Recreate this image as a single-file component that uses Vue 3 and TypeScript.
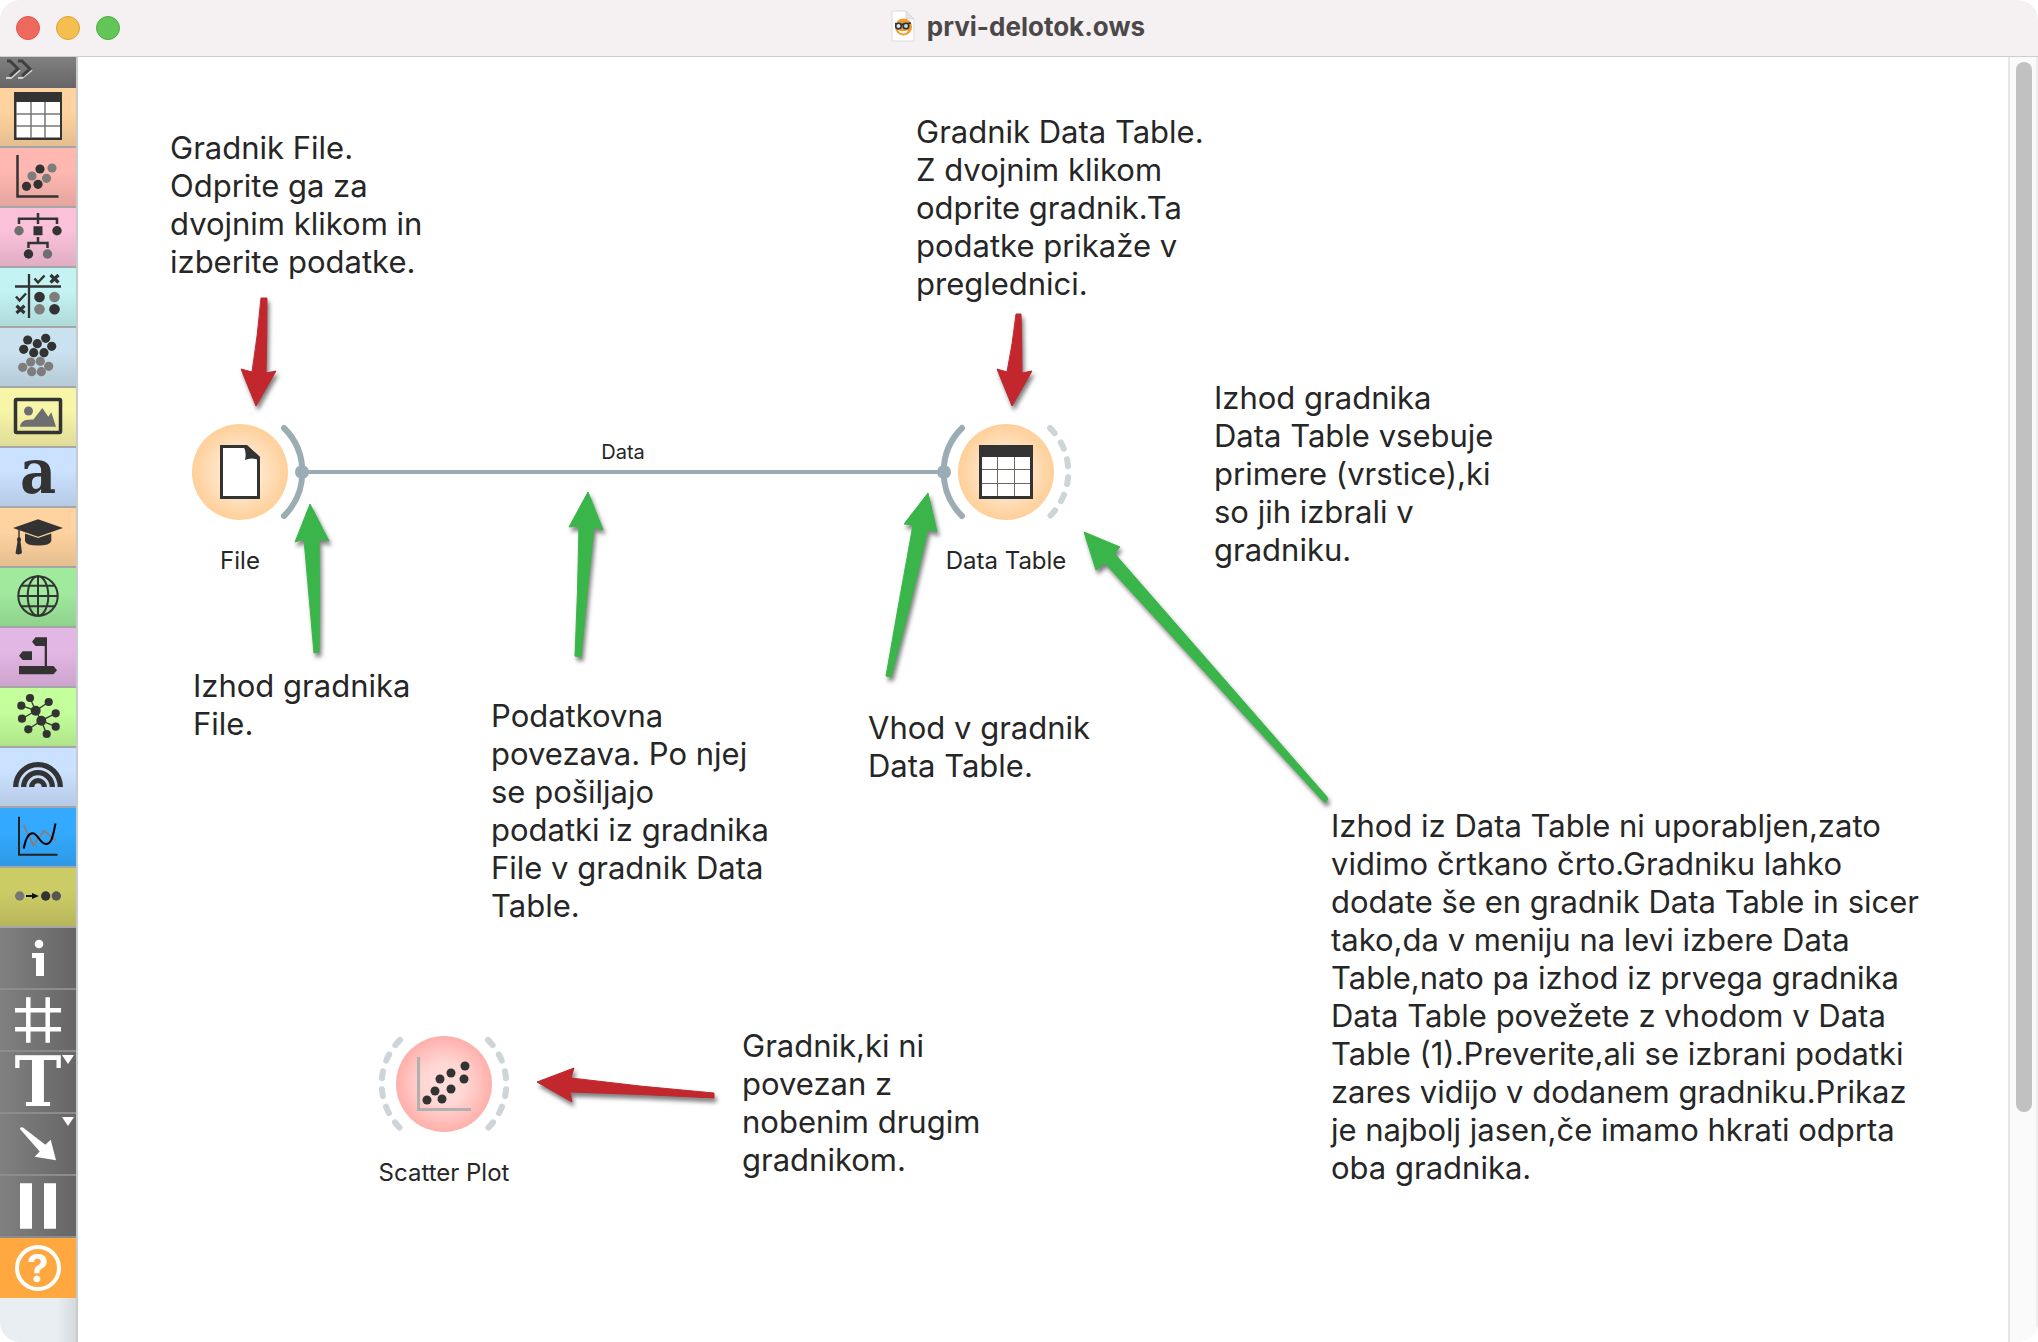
<script setup lang="ts">
interface Note {
  id: string
  x: number
  y: number
  lines: string[]
}

interface Caption {
  text: string
  x: number
  y: number
  small?: boolean
}

const notes: Note[] = [
  { id: 'file', x: 92, y: 72, lines: ['Gradnik File.', 'Odprite ga za', 'dvojnim klikom in', 'izberite podatke.'] },
  {
    id: 'table',
    x: 838,
    y: 56,
    lines: ['Gradnik Data Table.', 'Z dvojnim klikom', 'odprite gradnik.Ta', 'podatke prikaže v', 'preglednici.'],
  },
  {
    id: 'table-output',
    x: 1136,
    y: 322,
    lines: ['Izhod gradnika', 'Data Table vsebuje', 'primere (vrstice),ki', 'so jih izbrali v', 'gradniku.'],
  },
  { id: 'file-output', x: 115, y: 610, lines: ['Izhod gradnika', 'File.'] },
  {
    id: 'link',
    x: 413,
    y: 640,
    lines: ['Podatkovna', 'povezava. Po njej', 'se pošiljajo', 'podatki iz gradnika', 'File v gradnik Data', 'Table.'],
  },
  { id: 'table-input', x: 790, y: 652, lines: ['Vhod v gradnik', 'Data Table.'] },
  { id: 'scatter', x: 664, y: 970, lines: ['Gradnik,ki ni', 'povezan z', 'nobenim drugim', 'gradnikom.'] },
  {
    id: 'unused-output',
    x: 1253,
    y: 750,
    lines: [
      'Izhod iz Data Table ni uporabljen,zato',
      'vidimo črtkano črto.Gradniku lahko',
      'dodate še en gradnik Data Table in sicer',
      'tako,da v meniju na levi izbere Data',
      'Table,nato pa izhod iz prvega gradnika',
      'Data Table povežete z vhodom v Data',
      'Table (1).Preverite,ali se izbrani podatki',
      'zares vidijo v dodanem gradniku.Prikaz',
      'je najbolj jasen,če imamo hkrati odprta',
      'oba gradnika.',
    ],
  },
]

const captions: Caption[] = [
  { text: 'File', x: 162, y: 490 },
  { text: 'Data Table', x: 928, y: 490 },
  { text: 'Scatter Plot', x: 366, y: 1102 },
  { text: 'Data', x: 545, y: 383, small: true },
]

const redArrows: string[] = [
  'M261 298H267Q267 336 266 373L276 371 256 406 241 369 252 372Q258 334 261 298Z',
  'M1016 314H1021Q1022 344 1022 373L1032 371 1012 406 997 369 1007 372Q1013 342 1016 314Z',
  'M537 1082L574 1068 571 1078Q642 1087 714 1093V1098Q640 1094 570 1092L572 1102Z',
]

const greenArrows: string[] = [
  'M310 504L295 542 304 539Q309 596 314 653L319 652Q320 596 319 539L329 541Z',
  'M588 492L569 527 579 526Q578 592 575 656L581 657Q587 592 594 527L603 530Z',
  'M928 493L904 524 913 525Q899 601 886 676L891 677Q911 604 928 529L937 532Z',
  'M1084 532L1120 547 1114 553 1327 797Q1329 801 1324 802L1105 563 1096 570Z',
]

const scatterDots: [number, number][] = [
  [427, 1100], [435, 1091], [442, 1099], [440, 1079], [451, 1089], [451, 1073], [464, 1079], [465, 1066],
]
</script>

<template>
  <div class="window">
    <header class="titlebar">
      <div class="lights">
        <button type="button" class="light close" aria-label="Zapri"></button>
        <button type="button" class="light minimize" aria-label="Pomanjšaj"></button>
        <button type="button" class="light zoom" aria-label="Povečaj"></button>
      </div>
      <h1 class="title">
        <svg width="24" height="32" viewBox="0 0 24 32" aria-hidden="true">
          <path d="M1 1H15L23 9V31H1Z" fill="#fff" stroke="#dedcdd" />
          <path d="M15 1V9H23Z" fill="#e6e4e5" stroke="#d2d0d1" stroke-width=".6" />
          <circle cx="12.500" cy="17" r="8.500" fill="#f39a2a" />
          <path d="M7 20Q12 22.500 17 20Q16 24 11.500 23.500 8 23 7 20Z" fill="#fff" />
          <path d="M4 13.500Q12 15 20 13" fill="none" stroke="#263342" stroke-width="1.500" />
          <circle cx="7.500" cy="16" r="2.800" fill="#dbe8f0" stroke="#263342" stroke-width="1.600" />
          <circle cx="15" cy="16" r="2.800" fill="#b9d6e4" stroke="#263342" stroke-width="1.600" />
        </svg>
        <span>prvi-delotok.ows</span>
      </h1>
    </header>

    <div class="body">
      <nav class="toolbox" aria-label="Orodja">
        <button type="button" class="toggle" aria-label="Razširi">
          <svg width="76" height="31" viewBox="0 0 76 31" fill="none">
            <path d="M6 21H11L20 13M18 21H22L32 13" stroke="#d0d0d0" stroke-width="2" />
            <path d="M7 4H10L18 12 10 19M18 4H22L30 12 22 19" stroke="#404040" stroke-width="3" />
          </svg>
        </button>

        <button type="button" class="tile orange" aria-label="Data">
          <svg viewBox="0 0 76 58">
            <path fill="#333" d="M14 4H62V52H14Z" />
            <path fill="#fff" d="M16.500 14H60V49.500H16.500Z" />
            <path d="M31 14V50M45 14V50M16 26H60M16 38H60" fill="none" stroke="#777" stroke-width="1.500" />
          </svg>
        </button>
        <button type="button" class="tile red" aria-label="Visualize">
          <svg viewBox="0 0 76 58">
            <path d="M17.500 7V48.500H58.500" fill="none" stroke="#333" stroke-width="2.500" />
            <g fill="#7d7d7d"><circle cx="52" cy="20" r="4.600" /><circle cx="32" cy="28" r="4.600" /><circle cx="46.500" cy="30.300" r="4.600" /></g>
            <g fill="#333"><circle cx="40" cy="21" r="4.600" /><circle cx="26.500" cy="38.300" r="4.600" /><circle cx="38" cy="36.300" r="4.600" /></g>
          </svg>
        </button>
        <button type="button" class="tile pink" aria-label="Model">
          <svg viewBox="0 0 76 58">
            <path d="M19 16V10.700H57V16M38 5V16M38 29V35M28.500 40V35H47.500V40" fill="none" stroke="#333" stroke-width="2.500" />
            <path fill="#333" d="M33.500 18.300H42.500V27.300H33.500Z" />
            <g fill="#6e6e6e"><circle cx="19" cy="22.700" r="4.700" /><circle cx="47.500" cy="46" r="4.700" /></g>
            <g fill="#333"><circle cx="57" cy="22.700" r="4.700" /><circle cx="28.500" cy="46" r="4.700" /></g>
          </svg>
        </button>
        <button type="button" class="tile cyan" aria-label="Evaluate">
          <svg viewBox="0 0 76 58">
            <g fill="none" stroke="#333">
              <path d="M29 6V50M15 18.500H61" stroke-width="2.300" />
              <path d="M34.500 10.500L38 14.500 44.500 7.500M16 28.500L19.500 32.500 26 25.500" stroke-width="2.500" />
              <path d="M50.500 7L58.500 14.500M58.500 7L50.500 14.500M16.500 37.700L24.500 45M24.500 37.700L16.500 45" stroke-width="3.200" />
            </g>
            <g fill="#7d7d7d"><circle cx="54.500" cy="29" r="5.300" /><circle cx="39.500" cy="41.300" r="5.300" /></g>
            <g fill="#333"><circle cx="39.500" cy="29" r="5.300" /><circle cx="54.500" cy="41.300" r="5.300" /></g>
          </svg>
        </button>
        <button type="button" class="tile steel" aria-label="Unsupervised">
          <svg viewBox="0 0 76 58">
            <g fill="#333">
              <circle cx="27.700" cy="12" r="4.600" /><circle cx="45.700" cy="10.300" r="4.600" /><circle cx="37.300" cy="15.700" r="4.600" />
              <circle cx="51.700" cy="18.300" r="4.600" /><circle cx="23.700" cy="21.300" r="4.600" /><circle cx="33.700" cy="24.700" r="4.600" />
              <circle cx="44" cy="24.700" r="4.600" />
            </g>
            <g fill="#7d7d7d">
              <circle cx="30.700" cy="34" r="4.600" /><circle cx="40.300" cy="33.300" r="4.600" /><circle cx="22.700" cy="39.300" r="4.600" />
              <circle cx="48.700" cy="38.300" r="4.600" /><circle cx="31.700" cy="43.700" r="4.600" /><circle cx="41.300" cy="43.700" r="4.600" />
            </g>
          </svg>
        </button>
        <button type="button" class="tile yellow" aria-label="Image Analytics">
          <svg viewBox="0 0 76 58">
            <rect x="15.500" y="11.500" width="45" height="33" rx="1" fill="none" stroke="#333" stroke-width="3.500" />
            <circle cx="28.500" cy="23" r="4.500" fill="#6e6e6e" />
            <path fill="#6e6e6e" d="M20 38.700Q21 32 28 31.700L33.500 31.500 42.300 20 48.300 28.700 51.300 24.300 56 38.700Z" />
          </svg>
        </button>
        <button type="button" class="tile blue letter" aria-label="Text Mining"><span>a</span></button>
        <button type="button" class="tile orange" aria-label="Educational">
          <svg viewBox="0 0 76 58" fill="#333">
            <path d="M13 20L38 11.300 63 20 38 28.700Z" />
            <path d="M25 25.500L38 30 51.300 25.500V33Q50 37.500 38 37.500T25 33Z" />
            <path d="M18.300 22H19.700V29Q22 31 20.500 33.500L22 45Q19 47.500 15.500 45.500L17.500 33.500Q16 31 18.300 29Z" />
          </svg>
        </button>
        <button type="button" class="tile green" aria-label="Geo">
          <svg viewBox="0 0 76 58" fill="none" stroke="#333" stroke-width="2">
            <circle cx="38" cy="28" r="19.700" />
            <ellipse cx="38" cy="28" rx="10.300" ry="19.700" />
            <path d="M38 8V48M18 28H58M21.500 17.700H54.500M21.500 38.300H54.500" />
          </svg>
        </button>
        <button type="button" class="tile violet" aria-label="Associate">
          <svg viewBox="0 0 76 58" fill="#333">
            <path d="M32 13.700L35.500 9.300H47V38H53.500L57 42.300 53.500 46.300H19V38H44.700V18H35.500Z" />
            <path d="M19 27.700L22.700 23.300H32V32H22.700Z" />
          </svg>
        </button>
        <button type="button" class="tile lime" aria-label="Network">
          <svg viewBox="0 0 76 58">
            <path d="M30 10L35.700 22.700 48.700 14M21.300 17.700L35.700 22.700 22 30.700M35.700 22.700L41.300 32.700 55.700 25.300M28.300 41.300L41.300 32.700 55.700 38.700M41.300 32.700L46.700 46" fill="none" stroke="#333" stroke-width="1.300" />
            <g fill="#333">
              <circle cx="35.700" cy="22.700" r="5" /><circle cx="41.300" cy="32.700" r="5" />
              <circle cx="30" cy="10" r="4.100" /><circle cx="48.700" cy="14" r="4.100" /><circle cx="21.300" cy="17.700" r="4.100" />
              <circle cx="22" cy="30.700" r="4.100" /><circle cx="55.700" cy="25.300" r="4.100" /><circle cx="55.700" cy="38.700" r="4.100" />
              <circle cx="28.300" cy="41.300" r="4.100" /><circle cx="46.700" cy="46" r="4.100" />
            </g>
          </svg>
        </button>
        <button type="button" class="tile blue" aria-label="Spectroscopy">
          <svg viewBox="0 0 76 58" fill="none" stroke="#333" stroke-width="5.300">
            <path d="M15.700 39A22.300 22.300 0 0 1 60.300 39M23.700 39A14.300 14.300 0 0 1 52.300 39M31.700 39A6.300 6.300 0 0 1 44.300 39" />
          </svg>
        </button>
        <button type="button" class="tile azure" aria-label="Time Series">
          <svg viewBox="0 0 76 58" fill="none" stroke-width="2">
            <path d="M19 8.700V46.700H57.500" stroke="#222" />
            <path d="M23.700 17.300L33.300 37.300 44 22.700 56 32.700" stroke="#808080" />
            <path d="M23.700 40.500C26 29 29 25.300 32.500 25.300C38 25.300 40 36 46 36C52 36 53 27 55.500 15.500" stroke="#000" />
          </svg>
        </button>
        <button type="button" class="tile olive" aria-label="Prototypes">
          <svg viewBox="0 0 76 58">
            <circle cx="19.700" cy="28" r="4.700" fill="#777" />
            <path d="M26 27H32V25L39 28 32 31V29H26Z" fill="#111" />
            <circle cx="45.700" cy="28" r="4.700" fill="#333" /><circle cx="56.300" cy="28" r="4.700" fill="#555" />
          </svg>
        </button>

        <button type="button" class="tool" aria-label="Informacije">
          <svg viewBox="0 0 76 60" fill="#fff">
            <circle cx="39" cy="16" r="4.300" />
            <path d="M32 25H44V48H36V30H32Z" />
          </svg>
        </button>
        <button type="button" class="tool" aria-label="Mreža">
          <svg viewBox="0 0 76 60" fill="none" stroke="#fff" stroke-width="4.500">
            <path d="M28.300 7.300V52.700M47.700 7.300V52.700M15 20.300H61M15 39.300H61" />
          </svg>
        </button>
        <button type="button" class="tool text-tool" aria-label="Besedilo">
          <span>T</span>
          <svg class="marker" width="12" height="9" viewBox="0 0 12 9"><path d="M0 0H12L6 9Z" fill="#fff" /></svg>
        </button>
        <button type="button" class="tool" aria-label="Puščica">
          <svg viewBox="0 0 76 60" fill="#fff">
            <path d="M20 15Q20 12.500 23 13.500L45.300 30.700 50.700 25.700 56 46.300 34.700 42.700 39.700 37.500Z" />
          </svg>
          <svg class="marker" width="12" height="9" viewBox="0 0 12 9"><path d="M0 0H12L6 9Z" fill="#fff" /></svg>
        </button>
        <button type="button" class="tool" aria-label="Premor">
          <svg viewBox="0 0 76 60" fill="#fff"><path d="M20 7.300H32V52.700H20ZM44 7.300H56V52.700H44Z" /></svg>
        </button>
        <button type="button" class="help" aria-label="Pomoč"><span>?</span></button>
      </nav>

      <main class="canvas">
        <svg class="scheme" aria-hidden="true">
          <defs>
            <radialGradient id="orangeFill">
              <stop offset="0" stop-color="#fff1e2" /><stop offset=".5" stop-color="#ffe3c4" /><stop offset="1" stop-color="#ffcf98" />
            </radialGradient>
            <radialGradient id="redFill">
              <stop offset="0" stop-color="#ffdedb" /><stop offset=".45" stop-color="#ffd6d3" /><stop offset="1" stop-color="#ffafaa" />
            </radialGradient>
          </defs>
          <g transform="translate(-78 -57)">
            <g fill="none" stroke="#9cacb4" stroke-linecap="round">
              <path d="M302 472H944" stroke-width="4" />
              <path d="M284 428A62 62 0 0 1 284 516M962 428A62 62 0 0 0 962 516" stroke-width="6" />
              <path
                d="M1050 428A62 62 0 0 1 1050 516M488 1040A62 62 0 0 1 488 1128M400 1040A62 62 0 0 0 400 1128"
                stroke="#cdd5d9" stroke-width="6" stroke-dasharray="7 11"
              />
            </g>
            <g fill="#9cacb4"><circle cx="302" cy="472" r="7" /><circle cx="944" cy="472" r="7" /></g>

            <circle cx="240" cy="472" r="48" fill="url(#orangeFill)" />
            <path d="M221.500 446.500H246.500L258.500 457.500V497.500H221.500Z" fill="#fff" stroke="#333" stroke-width="3" />
            <path d="M243 446H247L259 457V460Q251 457 245 460Q247 451 243 446Z" fill="#333" />

            <circle cx="1006" cy="472" r="48" fill="url(#orangeFill)" />
            <path d="M979 445H1033V499H979Z" fill="#333" />
            <path d="M982 457H1030V496H982Z" fill="#fff" />
            <path d="M997.500 457V496M1014.500 457V496M982 469.500H1030M982 483.500H1030" fill="none" stroke="#6d6762" />

            <circle cx="444" cy="1084" r="48" fill="url(#redFill)" />
            <path d="M418.500 1057V1109.500H471" fill="none" stroke="#b0b0b0" stroke-width="3" />
            <circle v-for="([cx, cy], i) in scatterDots" :key="i" :cx="cx" :cy="cy" r="4.500" fill="#333" />

            <g class="arrows red"><path v-for="d in redArrows" :key="d" :d="d" /></g>
            <g class="arrows green"><path v-for="d in greenArrows" :key="d" :d="d" /></g>
          </g>
        </svg>

        <span
          v-for="c in captions"
          :key="c.text"
          class="caption"
          :class="{ small: c.small }"
          :style="{ left: c.x + 'px', top: c.y + 'px' }"
        >{{ c.text }}</span>

        <p v-for="n in notes" :key="n.id" class="note" :style="{ left: n.x + 'px', top: n.y + 'px' }">
          <span v-for="line in n.lines" :key="line">{{ line }}</span>
        </p>
      </main>

      <div class="scrollbar"><div class="thumb"></div></div>
    </div>
  </div>
</template>

<style>
body {
  margin: 0;
  background: #fff;
}
</style>

<style scoped>
.window {
  display: flex;
  flex-direction: column;
  min-height: 100vh;
  overflow: hidden;
  border-radius: 20px;
  background: #fff;
  color: #262626;
  font-family: Inter, 'Liberation Sans', sans-serif;
}

button {
  display: block;
  box-sizing: border-box;
  margin: 0;
  padding: 0;
  border: 0;
  font-family: inherit;
}

.titlebar {
  display: grid;
  grid-template-columns: 1fr auto 1fr;
  align-items: center;
  height: 56px;
  border-bottom: 1px solid #d0cdcf;
  background: #f5f1f3;
}

.lights {
  display: flex;
  gap: 16px;
  padding-left: 16px;
}

.light {
  width: 24px;
  height: 24px;
  border-radius: 50%;
}

.close {
  border: 1px solid #d9564c;
  background: #ee6a5f;
}

.minimize {
  border: 1px solid #dba13a;
  background: #f5bf4f;
}

.zoom {
  border: 1px solid #4dac42;
  background: #61c655;
}

.title {
  display: flex;
  align-items: center;
  gap: 12px;
  margin: 0;
  padding: 0 2px 2px 0;
  color: #4b484a;
  font-size: 26px;
  font-weight: 700;
  line-height: 32px;
}

.title svg {
  margin-bottom: 2px;
}

.body {
  display: flex;
  flex: 1;
}

.toolbox {
  width: 76px;
  border-right: 2px solid #c6cbce;
  background: linear-gradient(90deg, #e8eef2 75%, #d3d9dd);
}

.toggle {
  width: 100%;
  height: 31px;
  background: linear-gradient(#808080, #666);
}

.tile,
.tool,
.help {
  position: relative;
  width: 100%;
}

.tile {
  height: 60px;
  border-bottom: 2px solid #a6a6a6;
  background-image: linear-gradient(transparent 40%, rgba(0, 0, 0, 0.1));
}

.tile svg,
.tool svg {
  display: block;
}

.orange { background-color: #ffd39f; }
.red { background-color: #ffb7b1; }
.pink { background-color: #fac1d9; }
.cyan { background-color: #c3f3f3; }
.steel { background-color: #cae1ef; }
.yellow { background-color: #f7f5a8; }
.blue { background-color: #cae1ff; }
.green { background-color: #a0ea9e; }
.violet { background-color: #e3b7e4; }
.lime { background-color: #c3ff9a; }
.azure { background-color: #33aaff; }
.olive { background-color: #cccc66; }

.letter {
  padding-bottom: 10px;
  color: #333;
  font-family: 'DejaVu Serif Condensed', 'DejaVu Serif', serif;
  font-size: 62px;
  font-weight: 700;
  line-height: 44px;
}

.tool {
  height: 62px;
  border-bottom: 2px solid #8c8c8c;
  background: linear-gradient(90deg, #808080, #666);
}

.text-tool {
  color: #fff;
  font-family: 'DejaVu Serif Condensed', 'DejaVu Serif', serif;
  font-size: 70px;
  font-weight: 700;
  line-height: 60px;
}

.tool .marker {
  position: absolute;
  top: 3px;
  right: 2px;
}

.help {
  display: flex;
  align-items: center;
  justify-content: center;
  height: 60px;
  background: #ffa840;
  color: #fff;
  font-size: 38px;
  font-weight: 700;
}

.help span {
  width: 38px;
  height: 38px;
  border: 4px solid #fff;
  border-radius: 50%;
  line-height: 38px;
}

.canvas {
  position: relative;
  flex: 1;
  overflow: hidden;
}

.scheme {
  position: absolute;
  inset: 0;
  width: 100%;
  height: 100%;
}

.arrows {
  stroke-linejoin: round;
  filter: drop-shadow(2px 4px 2px rgba(0, 0, 0, 0.5));
}

.arrows.red {
  fill: #c1272d;
  stroke: #c1272d;
}

.arrows.green {
  fill: #39b54a;
  stroke: #39b54a;
}

.note {
  position: absolute;
  margin: 0;
  font-size: 31px;
  line-height: 38px;
  white-space: nowrap;
}

.note span {
  display: block;
}

.caption {
  position: absolute;
  transform: translateX(-50%);
  font-size: 24px;
  line-height: 28px;
  white-space: nowrap;
}

.caption.small {
  font-size: 20px;
  line-height: 24px;
}

.scrollbar {
  display: flex;
  flex-direction: column;
  box-sizing: border-box;
  width: 30px;
  padding: 5px 4px 0 6px;
  border-right: 2px solid #efefef;
  border-left: 2px solid #e6e6e6;
  background: #fafafa;
}

.thumb {
  flex: 0 0 82%;
  border-radius: 8px;
  background: #c1c1c1;
}
</style>
